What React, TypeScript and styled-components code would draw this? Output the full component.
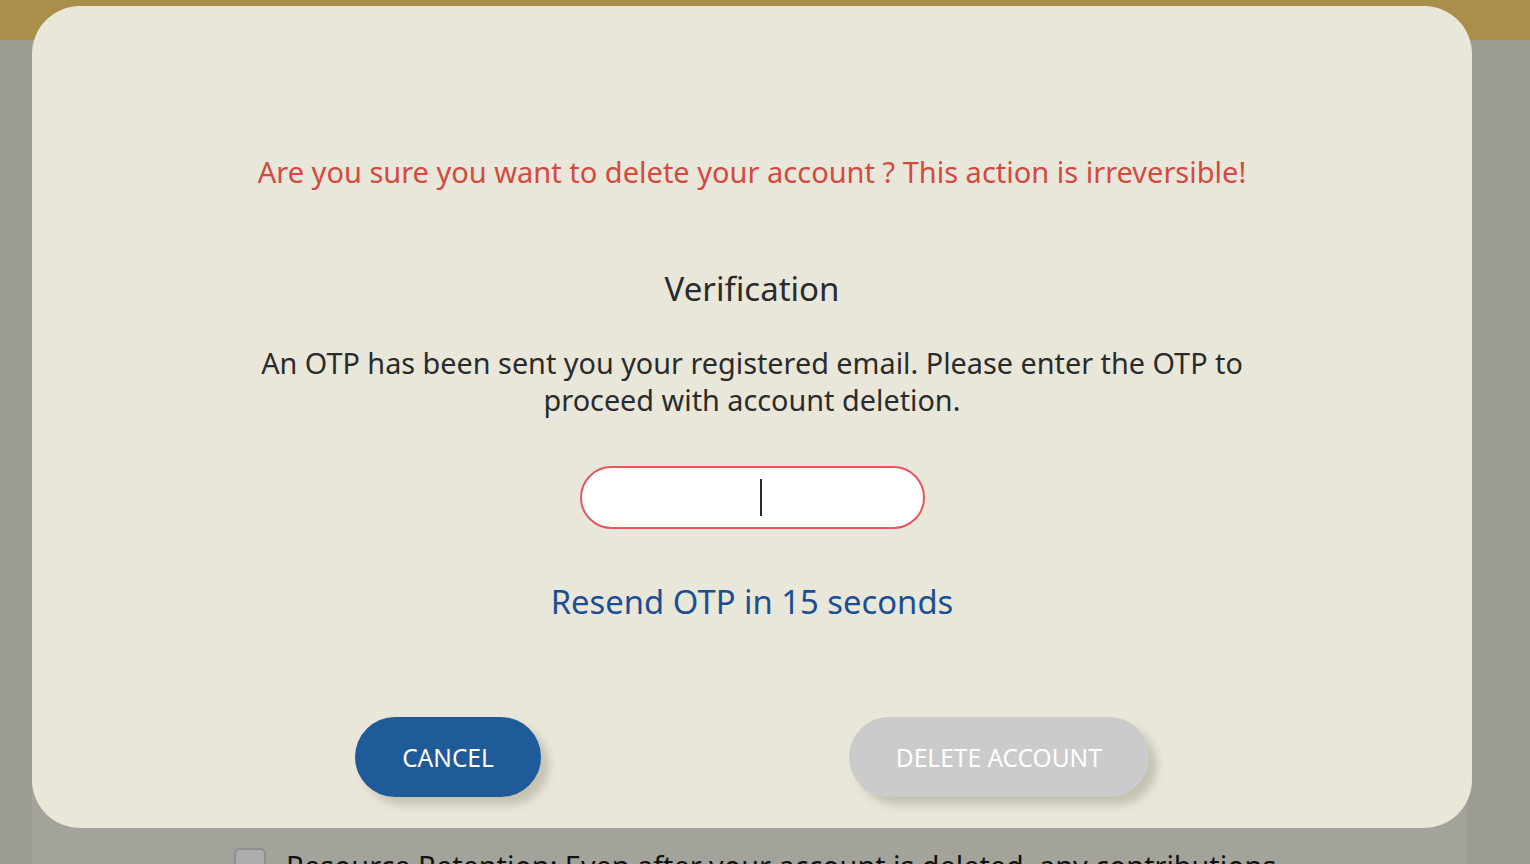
import React from "react";
import styled, { createGlobalStyle } from "styled-components";

const Global = createGlobalStyle`
  html, body { margin: 0; padding: 0; }
  body {
    background: #9c9c95;
    font-family: "Noto Sans", "Open Sans", sans-serif;
    overflow: hidden;
  }
`;

const Page = styled.div`
  width: 1530px;
  height: 864px;
  display: flex;
  flex-direction: column;
  background: #9c9c95;
`;

const Header = styled.header`
  height: 40px;
  background: #a98f4a;
  flex-shrink: 0;
`;

const Card = styled.section`
  flex: 1;
  margin: 0 64px 0 32px;
  background: #a4a39b;
  display: flex;
  flex-direction: column;
  justify-content: flex-end;
  padding: 0 0 0 202px;
`;

const ConsentRow = styled.label`
  display: flex;
  align-items: flex-start;
  gap: 20px;
  height: 16px;
  overflow: hidden;
  color: #121212;
  font-size: 28.8px;
  line-height: 36px;
  white-space: nowrap;
`;

const Box = styled.span`
  width: 32px;
  height: 32px;
  border: 2px solid #8e8e8c;
  border-radius: 6px;
  background: #adadad;
  flex-shrink: 0;
  box-sizing: border-box;
`;

const Modal = styled.div`
  position: fixed;
  top: 6px;
  left: 32px;
  width: 1440px;
  height: 822px;
  box-sizing: border-box;
  background: #e9e7da;
  border-radius: 48px;
  display: flex;
  flex-direction: column;
  align-items: center;
  padding-top: 146px;
  text-align: center;
`;

const Warning = styled.p`
  margin: 0;
  color: #d24a40;
  font-size: 29px;
  line-height: 40px;
`;

const Title = styled.h2`
  margin: 75px 0 0;
  color: #2b2b2b;
  font-weight: 400;
  font-size: 33px;
  line-height: 44px;
`;

const Body = styled.p`
  margin: 33px 0 0;
  max-width: 1010px;
  color: #2b2b2b;
  font-size: 28.8px;
  line-height: 37px;
`;

const InputWrap = styled.div`
  position: relative;
  margin-top: 48px;
  width: 345px;
  height: 63px;
`;

const OtpInput = styled.input`
  width: 100%;
  height: 100%;
  box-sizing: border-box;
  border: 2px solid #e5565f;
  border-radius: 32px;
  background: #ffffff;
  outline: none;
  text-align: center;
  font-family: inherit;
  font-size: 26px;
  caret-color: transparent;
`;

const Caret = styled.span`
  position: absolute;
  left: 180px;
  top: 13px;
  width: 2px;
  height: 37px;
  background: #2b2b2b;
`;

const Resend = styled.p`
  margin: 51px 0 0;
  color: #1c4f92;
  font-size: 32.8px;
  line-height: 44px;
`;

const Actions = styled.div`
  margin-top: 93px;
  display: flex;
  gap: 308px;
`;

const Button = styled.button<{ $variant: "primary" | "disabled" }>`
  height: 80px;
  padding: 0 47px;
  border: none;
  border-radius: 40px;
  font-family: "Noto Sans", sans-serif;
  font-size: 24.5px;
  color: #ffffff;
  background: ${(p) => (p.$variant === "primary" ? "#1f5a99" : "#cbcbcb")};
  box-shadow: 8px 8px 8px rgba(120, 118, 90, 0.32);
  cursor: ${(p) => (p.$variant === "primary" ? "pointer" : "default")};
`;

export default function App() {
  return (
    <>
      <Global />
      <Page>
        <Header />
        <Card>
          <ConsentRow>
            <Box />
            <span>
              Resource Retention: Even after your account is deleted, any contributions
            </span>
          </ConsentRow>
        </Card>
      </Page>
      <Modal>
        <Warning>
          Are you sure you want to delete your account ? This action is irreversible!
        </Warning>
        <Title>Verification</Title>
        <Body>
          An OTP has been sent you your registered email. Please enter the OTP to proceed
          with account deletion.
        </Body>
        <InputWrap>
          <OtpInput type="text" inputMode="numeric" aria-label="OTP" />
          <Caret />
        </InputWrap>
        <Resend>Resend OTP in 15 seconds</Resend>
        <Actions>
          <Button $variant="primary">CANCEL</Button>
          <Button $variant="disabled" disabled>
            DELETE ACCOUNT
          </Button>
        </Actions>
      </Modal>
    </>
  );
}
